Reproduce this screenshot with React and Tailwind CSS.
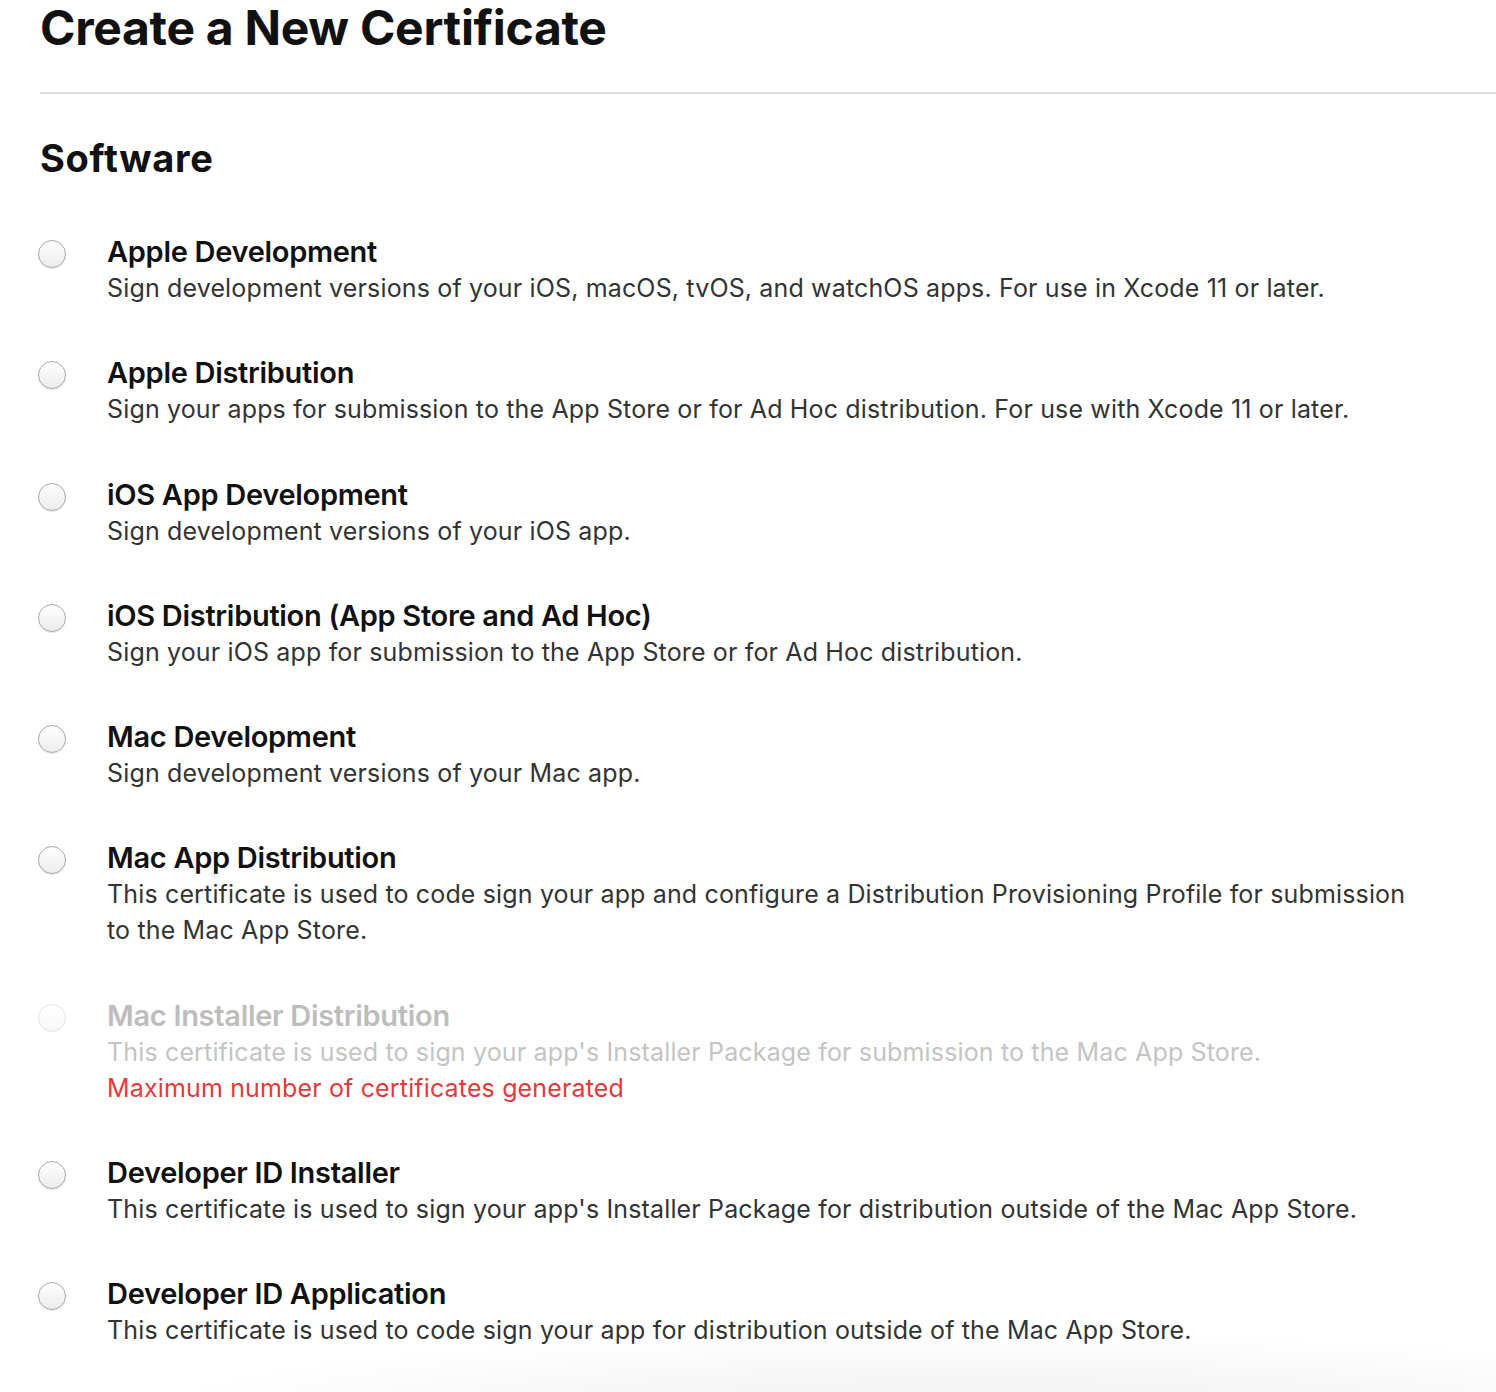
import React from 'react';

const certificates = [
  {
    title: 'Apple Development',
    lines: ['Sign development versions of your iOS, macOS, tvOS, and watchOS apps. For use in Xcode 11 or later.'],
  },
  {
    title: 'Apple Distribution',
    lines: ['Sign your apps for submission to the App Store or for Ad Hoc distribution. For use with Xcode 11 or later.'],
  },
  {
    title: 'iOS App Development',
    lines: ['Sign development versions of your iOS app.'],
  },
  {
    title: 'iOS Distribution (App Store and Ad Hoc)',
    lines: ['Sign your iOS app for submission to the App Store or for Ad Hoc distribution.'],
  },
  {
    title: 'Mac Development',
    lines: ['Sign development versions of your Mac app.'],
  },
  {
    title: 'Mac App Distribution',
    lines: [
      'This certificate is used to code sign your app and configure a Distribution Provisioning Profile for submission',
      'to the Mac App Store.',
    ],
  },
  {
    title: 'Mac Installer Distribution',
    lines: ["This certificate is used to sign your app's Installer Package for submission to the Mac App Store."],
    disabled: true,
    error: 'Maximum number of certificates generated',
  },
  {
    title: 'Developer ID Installer',
    lines: ["This certificate is used to sign your app's Installer Package for distribution outside of the Mac App Store."],
  },
  {
    title: 'Developer ID Application',
    lines: ['This certificate is used to code sign your app for distribution outside of the Mac App Store.'],
  },
];

const Radio = ({ disabled }) => (
  <div
    className={
      disabled
        ? 'mt-[7px] ml-[-2px] w-[28px] h-[28px] shrink-0 rounded-full border border-[#e4e4e4] bg-gradient-to-b from-white to-[#f8f8f8]'
        : 'mt-[7px] ml-[-2px] w-[28px] h-[28px] shrink-0 rounded-full border border-[#a9a9a9] bg-gradient-to-b from-white to-[#ececec] shadow-[0_1px_1px_rgba(0,0,0,0.1)]'
    }
  />
);

const CertificateOption = ({ cert }) => (
  <div className="flex gap-[41px]">
    <Radio disabled={cert.disabled} />
    <div>
      <div
        className={`text-[29px] leading-[37px] font-semibold tracking-[-0.3px] ${
          cert.disabled ? 'text-[#bdbdbd]' : 'text-[#111111]'
        }`}
      >
        {cert.title}
      </div>
      {cert.lines.map((line) => (
        <div
          key={line}
          className={`text-[25px] leading-[36px] tracking-[0.15px] ${cert.disabled ? 'text-[#c4c4c4]' : 'text-[#333333]'}`}
        >
          {line}
        </div>
      ))}
      {cert.error && (
        <div className="text-[25px] leading-[36px] tracking-[0.15px] text-[#e5393b]">{cert.error}</div>
      )}
    </div>
  </div>
);

const App = () => {
  return (
    <div className="relative min-h-[1392px] w-full overflow-hidden bg-white font-['Inter','Liberation_Sans',sans-serif]">
      <div className="pointer-events-none absolute bottom-[-90px] left-[150px] right-[-300px] h-[150px] bg-[radial-gradient(ellipse_at_center,#f2f2f2_0%,#f7f7f7_35%,rgba(255,255,255,0)_70%)]" />

      <div className="relative pl-10">
        <h1 className="pt-[4px] text-[48px] leading-[48px] font-bold tracking-[-0.3px] text-[#111111]">
          Create a New Certificate
        </h1>

        <div className="mt-[40px] h-[2px] bg-[#dddddd]" />

        <h2 className="mt-[45px] text-[38px] leading-[38px] font-bold tracking-[0.7px] text-[#111111]">Software</h2>

        <div className="mt-[56px] flex flex-col gap-[48.25px]">
          {certificates.map((cert) => (
            <CertificateOption key={cert.title} cert={cert} />
          ))}
        </div>
      </div>
    </div>
  );
};

export default App;
